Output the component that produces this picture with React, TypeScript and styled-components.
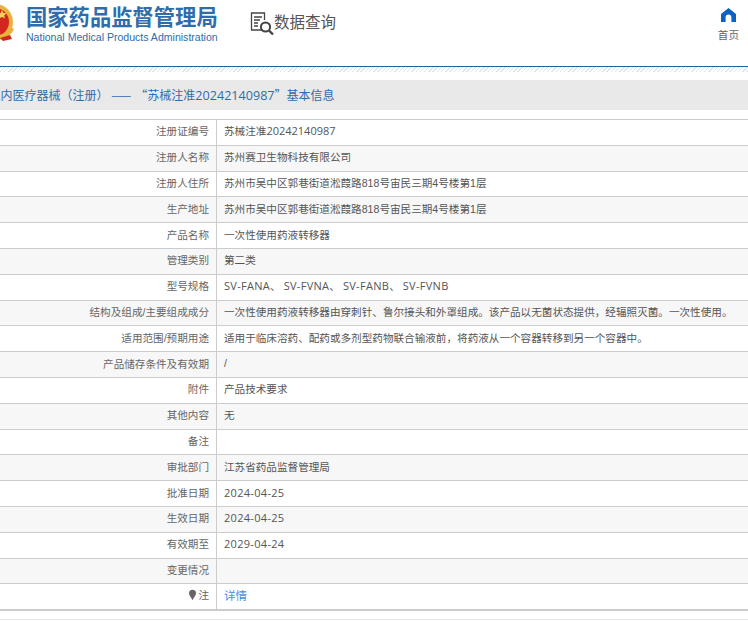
import * as React from 'react';
import styled, { createGlobalStyle } from 'styled-components';

const rows: [string, string][] = [
	['注册证编号', '苏械注准20242140987'],
	['注册人名称', '苏州赛卫生物科技有限公司'],
	['注册人住所', '苏州市吴中区郭巷街道淞葭路818号宙民三期4号楼第1层'],
	['生产地址', '苏州市吴中区郭巷街道淞葭路818号宙民三期4号楼第1层'],
	['产品名称', '一次性使用药液转移器'],
	['管理类别', '第二类'],
	['型号规格', 'SV-FANA、 SV-FVNA、 SV-FANB、 SV-FVNB'],
	['结构及组成/主要组成成分', '一次性使用药液转移器由穿刺针、鲁尔接头和外罩组成。该产品以无菌状态提供，经辐照灭菌。一次性使用。'],
	['适用范围/预期用途', '适用于临床溶药、配药或多剂型药物联合输液前，将药液从一个容器转移到另一个容器中。'],
	['产品储存条件及有效期', '/'],
	['附件', '产品技术要求'],
	['其他内容', '无'],
	['备注', ''],
	['审批部门', '江苏省药品监督管理局'],
	['批准日期', '2024-04-25'],
	['生效日期', '2024-04-25'],
	['有效期至', '2029-04-24'],
	['变更情况', ''],
];

const GlobalStyle = createGlobalStyle`
	html, body {
		margin: 0;
		padding: 0;
		background: #fff;
		overflow: hidden;
		font-family: "Liberation Sans", "Noto Sans CJK SC", sans-serif;
	}
`;

const Page = styled.div`
	width: 748px;
	height: 621px;
	overflow: hidden;
`;

const Header = styled.header`
	height: 66px;
	display: flex;
	align-items: flex-start;
	border-bottom: 1px solid #1f639f;
`;

const Emblem = styled.svg`
	width: 38px;
	height: 38px;
	margin: 4px 0 0 -24px;
	flex: none;
`;

const Brand = styled.div`
	margin: 3px 0 0 12px;
	width: 194px;
	flex: none;
`;

const BrandName = styled.div`
	font-family: "Noto Sans CJK SC", sans-serif;
	font-weight: 700;
	font-size: 21.3px;
	line-height: 26px;
	color: #2f6cab;
	white-space: nowrap;
`;

const BrandEnglish = styled.div`
	font-size: 10.55px;
	line-height: 14px;
	margin-top: 1px;
	color: #2f6cab;
	white-space: nowrap;
`;

const Query = styled.div`
	display: flex;
	align-items: flex-start;
	margin: 12px 0 0 30px;
	font-family: "Noto Sans CJK SC", sans-serif;
	font-size: 15.5px;
	line-height: 22px;
	color: #555;
`;

const QueryText = styled.span`
	margin-top: -2px;
`;

const HomeLink = styled.div`
	margin: 8px 9px 0 auto;
	display: flex;
	flex-direction: column;
	align-items: center;
	font-family: "Noto Sans CJK SC", sans-serif;
	font-size: 10.6px;
	line-height: 14px;
	color: #666;
	svg {
		margin-bottom: 6px;
	}
`;

const Hatch = styled.div`
	height: 5px;
	background: repeating-linear-gradient(135deg, #dde6ea 0 1px, #fff 1px 3px);
`;

const TitleBar = styled.div`
	height: 30px;
	margin-top: 8px;
	background: #e9e9e9;
	color: #2f6cab;
	font-family: "Noto Sans CJK SC", sans-serif;
	font-size: 12px;
	line-height: 30px;
	white-space: nowrap;
	overflow: hidden;
	text-indent: -11.5px;
`;

const TitleQuote = styled.span`
	margin-left: 4px;
`;

const TitleNumber = styled.span`
	font-family: "Open Sans", sans-serif;
	font-size: 12.6px;
`;

const Table = styled.table`
	margin-top: 9px;
	width: 748px;
	border-collapse: collapse;
	table-layout: fixed;
	border-top: 1px solid #ccc;
	border-bottom: 2px solid #ccc;
	font-family: "Liberation Sans", "Noto Sans CJK SC", sans-serif;
	font-size: 10.6px;
`;

const Row = styled.tr<{ $shaded: boolean }>`
	height: 25.8px;
	background: ${(props) => (props.$shaded ? '#f7f7f7' : '#fff')};
	border-bottom: 1px solid #ccc;
	&:last-child {
		border-bottom: none;
	}
`;

const Label = styled.td`
	width: 209px;
	padding: 0 7px 3px 0;
	text-align: right;
	color: #666;
	border-right: 1px solid #ccc;
	white-space: nowrap;
`;

const Value = styled.td`
	padding: 0 0 3px 7px;
	color: #555;
	white-space: nowrap;
	overflow: hidden;
`;

const Latin = styled.span<{ $wide: boolean }>`
	font-family: "Open Sans", sans-serif;
	font-size: 11px;
	letter-spacing: ${(props) => (props.$wide ? '0.3px' : '0')};
`;

const DetailLink = styled.span`
	color: #4a8fd6;
	font-size: 11.5px;
`;

const Pin = styled.svg`
	width: 7px;
	height: 12px;
	vertical-align: -2px;
	margin-right: 2px;
`;

const FooterLine = styled.div`
	margin-top: 8px;
	border-top: 1px solid #e6e6e6;
`;

// long latin runs sit in a wider face than the chinese text around them
const withLatin = (text: string) =>
	text.split(/([A-Za-z0-9-]{4,})/).map((part, index) =>
		index % 2 === 1 ? (
			<Latin key={index} $wide={part.includes('-')}>
				{part}
			</Latin>
		) : (
			part
		)
	);

const App = () => (
	<Page>
		<GlobalStyle />
		<Header>
			<Emblem viewBox="0 0 38 38">
				<circle cx="19" cy="18" r="18" fill="#e8b33c" />
				<circle cx="19" cy="18" r="14" fill="#d3261f" />
				<path d="M26 6l1.4 3 3.2.3-2.4 2.1.7 3.2-2.9-1.7-2.9 1.7.7-3.2-2.4-2.1 3.2-.3z" fill="#f4cf5a" />
				<path d="M19 30c6 2 12 0 16-7l3 2c-4 8-11 12-19 10z" fill="#e8b33c" />
				<path d="M24 34l10-3 2 4-9 2z" fill="#d3261f" />
			</Emblem>
			<Brand>
				<BrandName>国家药品监督管理局</BrandName>
				<BrandEnglish>National Medical Products Administration</BrandEnglish>
			</Brand>
			<Query>
				<svg width="24" height="24" viewBox="0 0 24 24" fill="none" stroke="#444" strokeWidth="1.3">
					<path d="M13 18H1.5V1h13v7" />
					<path d="M4 5h8M4 8h6M4 11h4M4 14h4" />
					<circle cx="15.5" cy="15" r="4.6" strokeWidth="2" />
					<path d="M19 18.5l4 4" strokeWidth="2.4" />
				</svg>
				<QueryText>数据查询</QueryText>
			</Query>
			<HomeLink>
				<svg width="15" height="14" viewBox="0 0 15 14">
					<path d="M7.5 0L15 6v8h-4.6V9.5a2.9 2.9 0 0 0-5.800 0V14H0V6z" fill="#0a62c4" />
				</svg>
				首页
			</HomeLink>
		</Header>
		<Hatch />
		<TitleBar>
			境内医疗器械（注册） ——
			<TitleQuote>“苏械注准<TitleNumber>20242140987</TitleNumber>”基本信息</TitleQuote>
		</TitleBar>
		<Table>
			<tbody>
				{rows.map(([label, value], index) => (
					<Row key={label} $shaded={index % 2 === 1}>
						<Label>{label}</Label>
						<Value>{withLatin(value)}</Value>
					</Row>
				))}
				<Row $shaded={false}>
					<Label>
						<Pin viewBox="0 0 8 12">
							<path d="M4 0a4 4 0 0 1 4 4c0 3-3 5-4 8-1-3-4-5-4-8a4 4 0 0 1 4-4z" fill="#666" />
						</Pin>
						注
					</Label>
					<Value>
						<DetailLink>详情</DetailLink>
					</Value>
				</Row>
			</tbody>
		</Table>
		<FooterLine />
	</Page>
);

export default App;
